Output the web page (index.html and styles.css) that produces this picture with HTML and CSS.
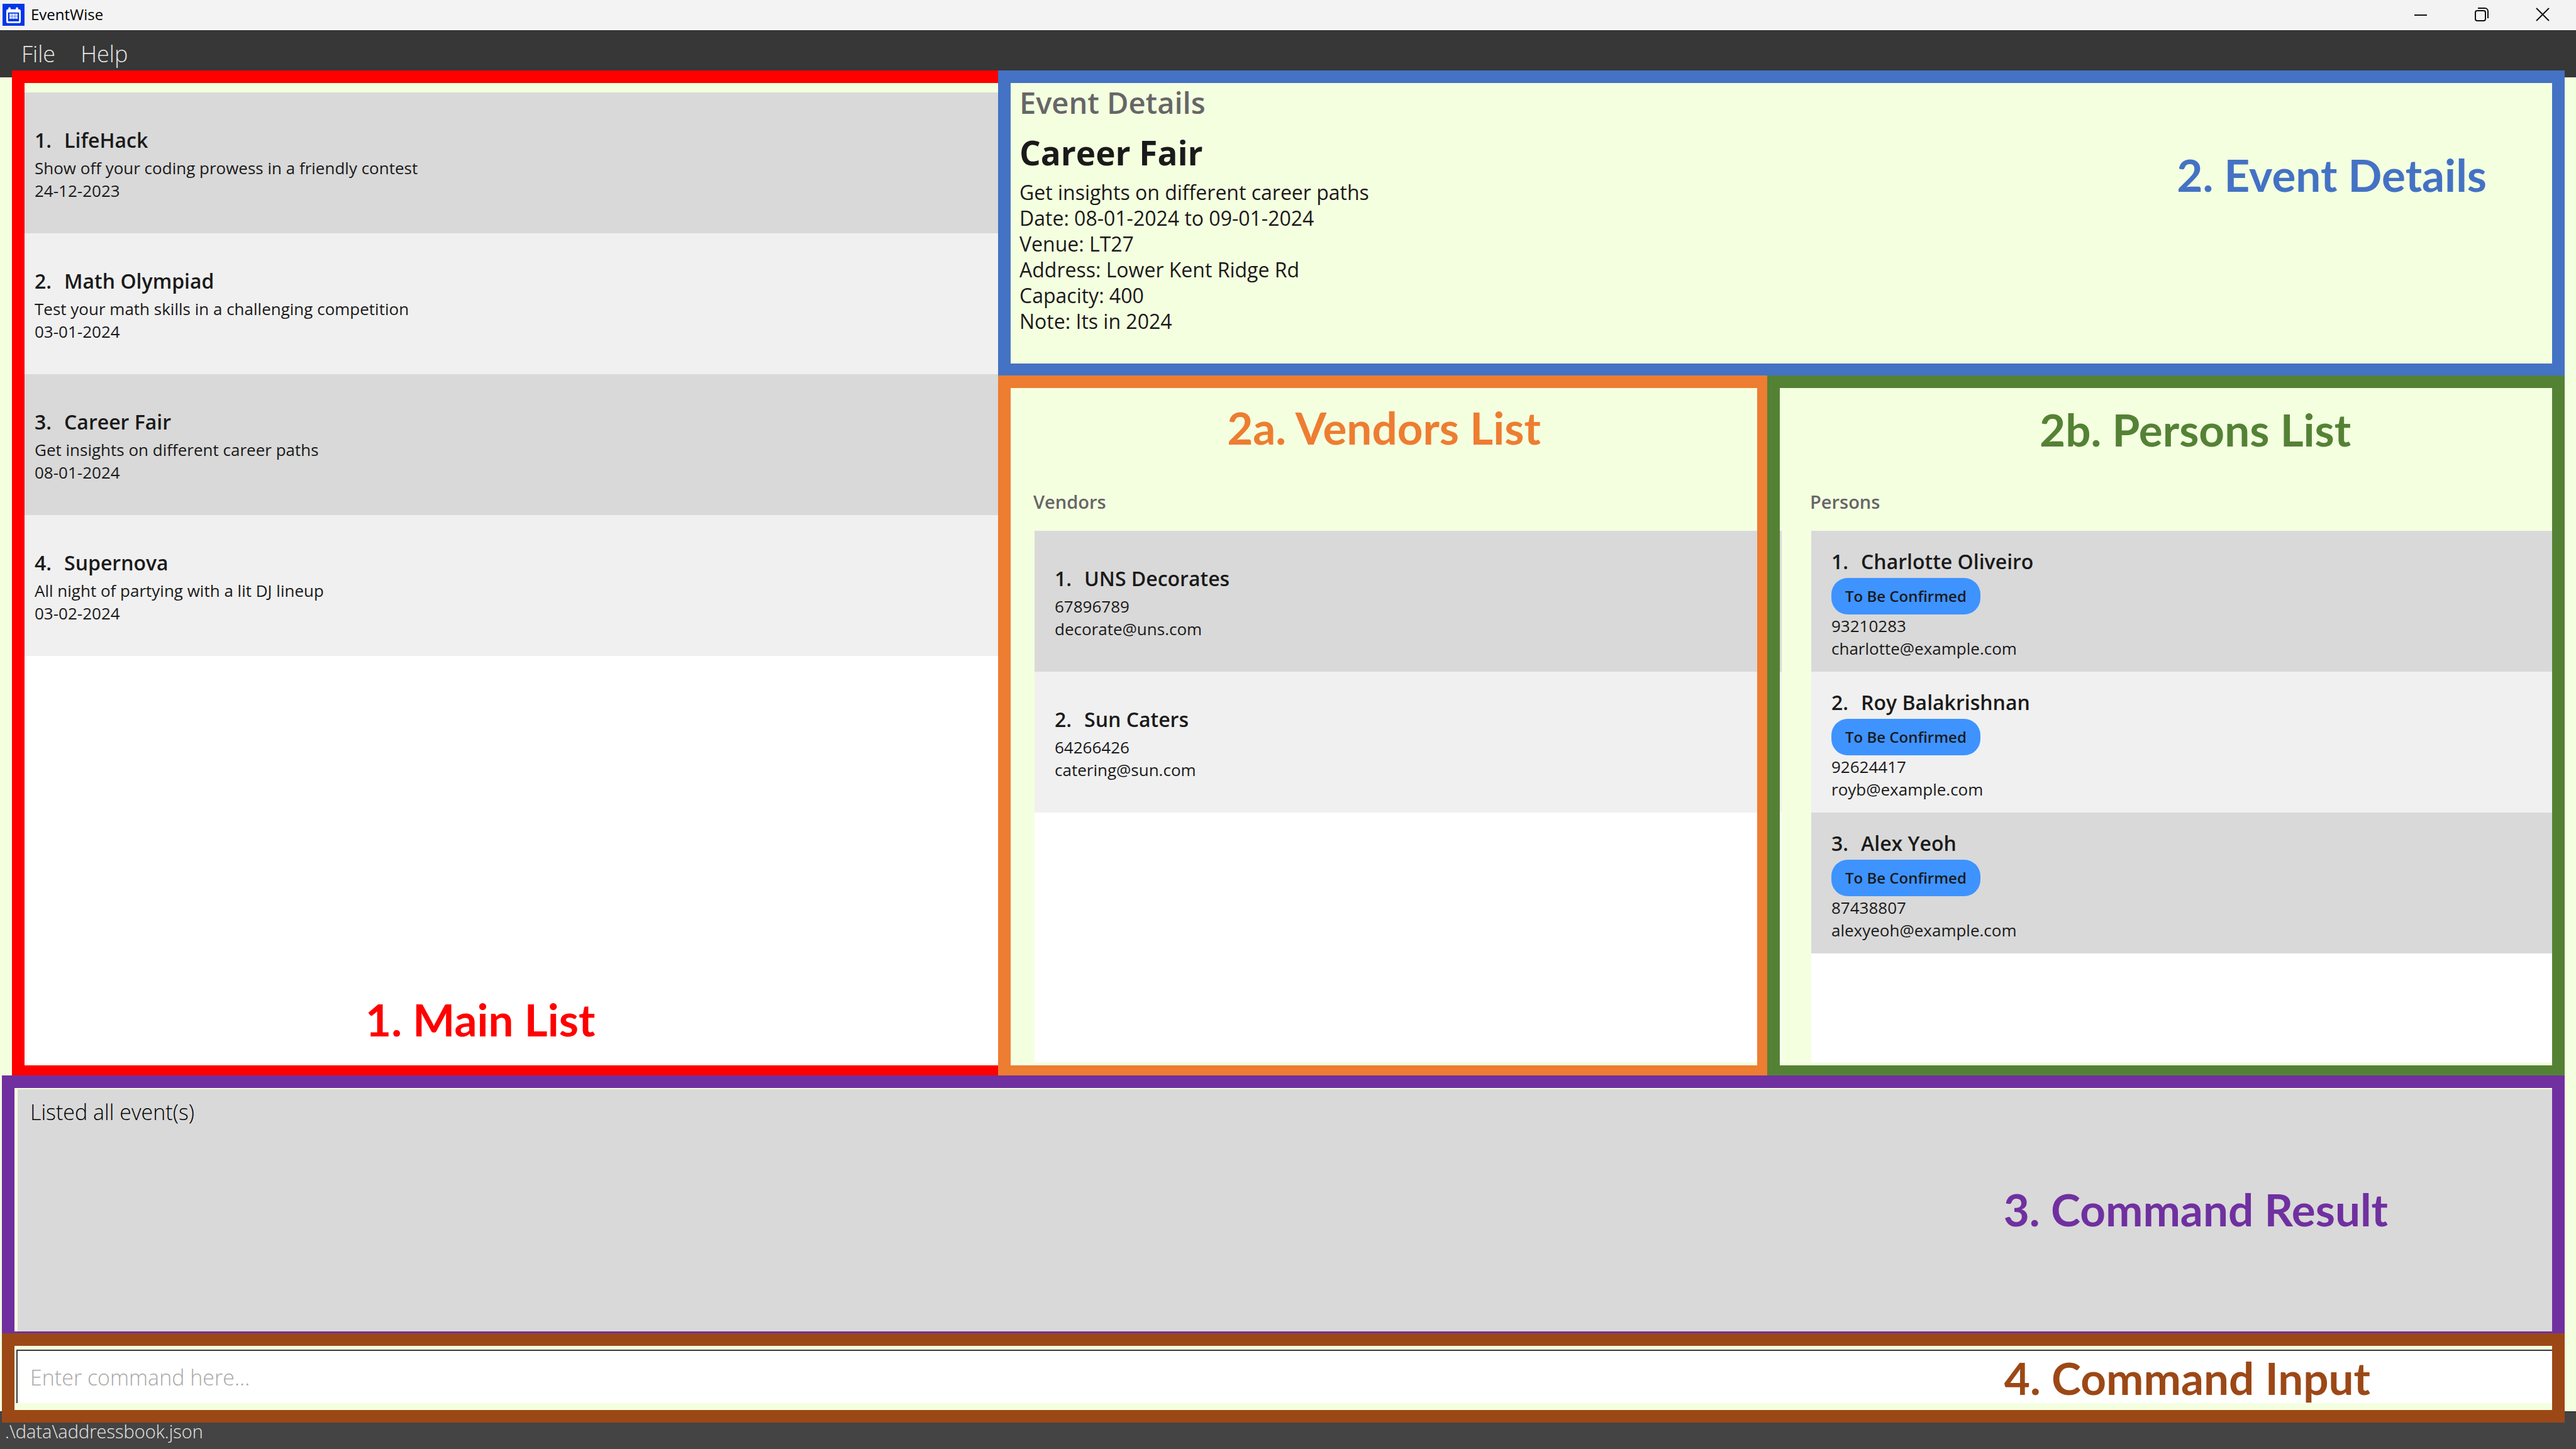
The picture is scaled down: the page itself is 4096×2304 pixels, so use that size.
FILE: index.html
```html
<!DOCTYPE html>
<html lang="en">
<head>
<meta charset="utf-8">
<title>EventWise</title>
<link rel="stylesheet" href="styles.css">
</head>
<body class="window">
<header class="titlebar">
  <svg class="app-icon" viewBox="0 0 38 38" aria-hidden="true">
    <rect width="38" height="38" fill="#0037e6"/>
    <path d="M12 8v5M25 8v5" stroke="#fff" stroke-width="4" stroke-linecap="round"/>
    <rect x="8" y="11" width="22" height="21" rx="2" fill="none" stroke="#fff" stroke-width="3"/>
    <path d="M8 10h22v5H8z" fill="#fff"/>
    <path d="M12 17h14v9H12z" fill="#dfe6ff"/>
    <path d="M16.500 17v9M21.500 17v9M12 21.500h14" stroke="#5f83f2" stroke-width="1"/>
  </svg>
  <h1 class="app-name">EventWise</h1>
  <div class="window-controls">
    <button class="window-button" type="button" aria-label="Minimize">
      <svg viewBox="0 0 24 24" class="control-icon"><path d="M2 13h20"/></svg>
    </button>
    <button class="window-button" type="button" aria-label="Restore">
      <svg viewBox="0 0 24 24" class="control-icon"><rect x="2" y="6" width="16" height="16" rx="3"/><path d="M6 2h11a5 5 0 0 1 5 5v11"/></svg>
    </button>
    <button class="window-button" type="button" aria-label="Close">
      <svg viewBox="0 0 24 24" class="control-icon"><path d="M2 2l20 20M22 2L2 22"/></svg>
    </button>
  </div>
</header>
<nav class="menubar">
  <button class="menu" type="button">File</button>
  <button class="menu" type="button">Help</button>
</nav>
<main class="content">
  <div class="workspace">
    <section class="panel panel-main">
      <ol class="list">
        <li class="row"><h3 class="row-title"><span>1.</span><span>LifeHack</span></h3><p class="row-text">Show off your coding prowess in a friendly contest</p><p class="row-text">24-12-2023</p></li>
        <li class="row"><h3 class="row-title"><span>2.</span><span>Math Olympiad</span></h3><p class="row-text">Test your math skills in a challenging competition</p><p class="row-text">03-01-2024</p></li>
        <li class="row"><h3 class="row-title"><span>3.</span><span>Career Fair</span></h3><p class="row-text">Get insights on different career paths</p><p class="row-text">08-01-2024</p></li>
        <li class="row"><h3 class="row-title"><span>4.</span><span>Supernova</span></h3><p class="row-text">All night of partying with a lit DJ lineup</p><p class="row-text">03-02-2024</p></li>
      </ol>
      <div class="callout callout-main">1. Main List</div>
    </section>
    <section class="panel panel-details">
      <h2 class="details-heading">Event Details</h2>
      <h3 class="details-name">Career Fair</h3>
      <p class="details-text">Get insights on different career paths</p>
      <p class="details-text">Date: 08-01-2024 to 09-01-2024</p>
      <p class="details-text">Venue: LT27</p>
      <p class="details-text">Address: Lower Kent Ridge Rd</p>
      <p class="details-text">Capacity: 400</p>
      <p class="details-text">Note: Its in 2024</p>
      <div class="callout callout-details">2. Event Details</div>
    </section>
    <section class="panel panel-vendors">
      <h2 class="list-heading">Vendors</h2>
      <ol class="list">
        <li class="row"><h3 class="row-title"><span>1.</span><span>UNS Decorates</span></h3><p class="row-text">67896789</p><p class="row-text">decorate@uns.com</p></li>
        <li class="row"><h3 class="row-title"><span>2.</span><span>Sun Caters</span></h3><p class="row-text">64266426</p><p class="row-text">catering@sun.com</p></li>
      </ol>
      <div class="callout callout-vendors">2a. Vendors List</div>
    </section>
    <section class="panel panel-persons">
      <h2 class="list-heading">Persons</h2>
      <ol class="list">
        <li class="row"><h3 class="row-title"><span>1.</span><span>Charlotte Oliveiro</span></h3><span class="badge">To Be Confirmed</span><p class="row-text">93210283</p><p class="row-text">charlotte@example.com</p></li>
        <li class="row"><h3 class="row-title"><span>2.</span><span>Roy Balakrishnan</span></h3><span class="badge">To Be Confirmed</span><p class="row-text">92624417</p><p class="row-text">royb@example.com</p></li>
        <li class="row"><h3 class="row-title"><span>3.</span><span>Alex Yeoh</span></h3><span class="badge">To Be Confirmed</span><p class="row-text">87438807</p><p class="row-text">alexyeoh@example.com</p></li>
      </ol>
      <div class="callout callout-persons">2b. Persons List</div>
    </section>
  </div>
  <section class="panel panel-result">
    <textarea class="result" readonly aria-label="Command result">Listed all event(s)</textarea>
    <div class="callout callout-result">3. Command Result</div>
  </section>
  <section class="panel panel-input">
    <input class="command" type="text" placeholder="Enter command here..." aria-label="Command">
    <div class="callout callout-input">4. Command Input</div>
  </section>
</main>
<footer class="statusbar">.\data\addressbook.json</footer>
</body>
</html>
```
FILE: styles.css
```css
* {
  box-sizing: border-box;
  margin: 0;
  padding: 0;
}

.window {
  display: flex;
  flex-direction: column;
  min-height: 100vh;
  background: #f4ffe0;
  color: #1a1a1a;
  font-family: "Open Sans", "Noto Sans", sans-serif;
}

/* Title bar */
.titlebar {
  display: flex;
  align-items: center;
  gap: 10px;
  height: 48px;
  padding: 0 5px 0 4px;
  background: #f3f3f3;
  border-bottom: 2px solid #fff;
}

.app-icon {
  width: 35px;
  height: 35px;
}

.app-name {
  font-size: 24px;
  font-weight: 400;
  line-height: 32px;
  color: #000;
}

.window-controls {
  display: flex;
  margin-left: auto;
}

.window-button {
  display: flex;
  align-items: center;
  justify-content: center;
  width: 97px;
  height: 42px;
  border: 0;
  background: none;
}

.control-icon {
  width: 24px;
  height: 24px;
  fill: none;
  stroke: #111;
  stroke-width: 2;
}

/* Menu bar */
.menubar {
  display: flex;
  align-items: center;
  gap: 40px;
  height: 75px;
  padding-left: 34px;
  background: #373737;
  border-top: 1px solid #2b2b2b;
}

.menu {
  border: 0;
  background: none;
  color: #e6e6e6;
  font-family: inherit;
  font-size: 36px;
  font-weight: 300;
  line-height: 48px;
}

/* Framed panels: the frame lies over the edges of what it surrounds */
.content {
  position: relative;
  z-index: 1;
  display: flex;
  flex: 1;
  flex-direction: column;
  margin: -11px 18px -18px 3px;
}

.panel {
  --frame: #000;
  position: relative;
  color: #1a1a1a;
}

.panel::after {
  content: "";
  position: absolute;
  inset: 0;
  z-index: 2;
  border: 20px solid var(--frame);
  pointer-events: none;
}

.workspace {
  display: grid;
  flex: 1602 1 0;
  grid-template-columns: 1568fr 1223fr 1268fr;
  grid-template-rows: auto 1fr;
  margin-left: 16px;
}

.panel-main {
  --frame: #f00;
  display: flex;
  grid-row: 1 / 3;
  margin-right: -20px;
  padding: 35px 20px 21px 19px;
  z-index: 0;
}

.panel-details {
  --frame: #4472c4;
  grid-column: 2 / 4;
  margin-bottom: -1px;
  padding: 19px 20px 67px 34px;
  background: #f4ffe0;
  z-index: 1;
}

.panel-vendors {
  --frame: #ed7d31;
  display: flex;
  flex-direction: column;
  margin-right: -4px;
  padding: 181px 0 25px 58px;
  background: #f4ffe0;
  z-index: 1;
}

.panel-vendors .list {
  margin-right: -19px;
}

.panel-persons {
  --frame: #548235;
  display: flex;
  flex-direction: column;
  padding: 181px 20px 25px 70px;
  z-index: 2;
}

/* Lists */
.list-heading {
  margin: 0 0 26px -2px;
  color: #666;
  font-size: 29px;
  font-weight: 600;
  line-height: 40px;
}

.list {
  flex: 1;
  background: #fff;
  list-style: none;
}

.row {
  height: 224px;
  padding: 50px 32px 0;
  background: #d9d9d9;
}

.row:nth-child(even) {
  background: #f0f0f0;
}

.panel-main .row {
  padding-left: 17px;
}

.panel-persons .row {
  padding-top: 23px;
}

.row-title {
  display: flex;
  gap: 20px;
  font-size: 32px;
  font-weight: 600;
  line-height: 52px;
}

.row-text {
  font-size: 26px;
  line-height: 36px;
}

.badge {
  display: block;
  width: max-content;
  padding: 0 22px;
  border-radius: 26px;
  background: #3e93ff;
  font-size: 24px;
  font-weight: 600;
  line-height: 58px;
}

/* Event details */
.details-heading {
  margin-bottom: 6px;
  color: #666;
  font-size: 47px;
  font-weight: 600;
  line-height: 64px;
}

.details-name {
  font-size: 53px;
  font-weight: 700;
  line-height: 84px;
}

.details-text {
  font-size: 32px;
  line-height: 41px;
}

/* Command result and input */
.panel-result {
  --frame: #7030a0;
  display: flex;
  flex: 385 1 0;
  margin-top: -4px;
  padding: 22px 0 20px 25px;
  background: #f4ffe0;
  z-index: 3;
}

.result {
  flex: 1;
  padding: 13px 20px;
  border: 0;
  background: #d9d9d9;
  color: #000;
  font-family: inherit;
  font-size: 34px;
  font-weight: 300;
  line-height: 46px;
  resize: none;
}

.panel-input {
  --frame: #9c4816;
  display: flex;
  margin-top: -17px;
  padding: 26px 0 31px 23px;
  background: #f4ffe0;
  z-index: 4;
}

.command {
  flex: 1;
  height: 85px;
  padding: 0 20px;
  border: solid #383838;
  border-width: 2px 0 0 2px;
  background: #fff;
  font-family: inherit;
  font-size: 34px;
  font-weight: 300;
}

.command::placeholder {
  color: #a8a8a8;
}

/* Callouts over the panels */
.callout {
  position: absolute;
  z-index: 3;
  color: var(--frame);
  font-family: Lato, sans-serif;
  font-size: 71px;
  font-weight: 700;
  line-height: 80px;
  white-space: nowrap;
}

.callout-main {
  bottom: 53px;
  left: 562px;
}

.callout-details {
  top: 126px;
  right: 124px;
}

.callout-vendors {
  top: 43px;
  right: 0;
  left: 0;
  text-align: center;
}

.callout-persons {
  top: 46px;
  left: 433px;
}

.callout-result {
  top: 173px;
  right: 281px;
}

.callout-input {
  top: 31px;
  right: 309px;
}

/* Status bar */
.statusbar {
  height: 60px;
  padding: 13px 8px 0;
  border-top: 2px solid #363636;
  background: #444;
  color: #e6e6e6;
  font-size: 29px;
  font-weight: 300;
  line-height: 34px;
}
```
